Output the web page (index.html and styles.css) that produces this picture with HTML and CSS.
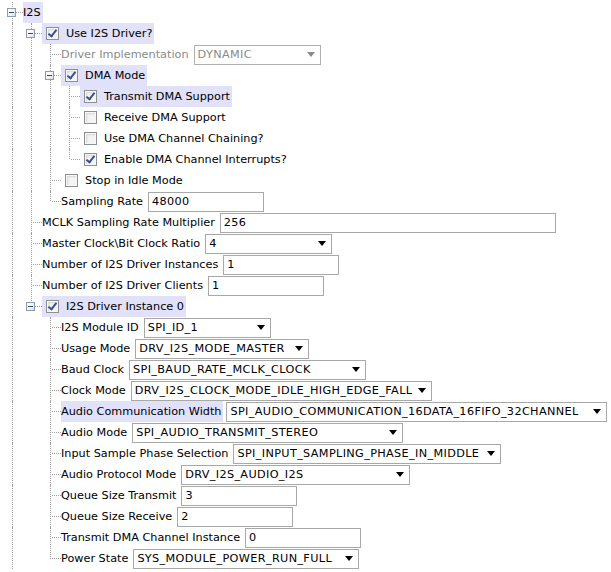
FILE: index.html
```html
<!DOCTYPE html>
<html>
<head>
<meta charset="utf-8">
<link rel="stylesheet" href="styles.css">
</head>
<body>
<div class="tree">
  <div class="row">
    <span class="conn root"><span class="exp"></span></span>
    <span class="item sel"><span class="lbl">I2S</span></span>
  </div>
  <div class="row">
    <span class="g pipe"></span>
    <span class="conn tee"><span class="exp"></span></span>
    <span class="item sel chk"><span class="cb on"></span><span class="lbl">Use I2S Driver?</span></span>
  </div>
  <div class="row">
    <span class="g pipe"></span><span class="g pipe"></span>
    <span class="conn tee"></span>
    <span class="item dis"><span class="lbl">Driver Implementation</span></span>
    <span class="field dd dis w127"><span class="val">DYNAMIC</span><span class="arrow"></span></span>
  </div>
  <div class="row">
    <span class="g pipe"></span><span class="g pipe"></span>
    <span class="conn tee"><span class="exp"></span></span>
    <span class="item sel chk"><span class="cb on"></span><span class="lbl">DMA Mode</span></span>
  </div>
  <div class="row">
    <span class="g pipe"></span><span class="g pipe"></span><span class="g pipe"></span>
    <span class="conn tee"></span>
    <span class="item sel chk"><span class="cb on"></span><span class="lbl">Transmit DMA Support</span></span>
  </div>
  <div class="row">
    <span class="g pipe"></span><span class="g pipe"></span><span class="g pipe"></span>
    <span class="conn tee"></span>
    <span class="item chk"><span class="cb"></span><span class="lbl">Receive DMA Support</span></span>
  </div>
  <div class="row">
    <span class="g pipe"></span><span class="g pipe"></span><span class="g pipe"></span>
    <span class="conn tee"></span>
    <span class="item chk"><span class="cb"></span><span class="lbl">Use DMA Channel Chaining?</span></span>
  </div>
  <div class="row">
    <span class="g pipe"></span><span class="g pipe"></span><span class="g pipe"></span>
    <span class="conn end"></span>
    <span class="item chk"><span class="cb on"></span><span class="lbl">Enable DMA Channel Interrupts?</span></span>
  </div>
  <div class="row">
    <span class="g pipe"></span><span class="g pipe"></span>
    <span class="conn tee"></span>
    <span class="item chk"><span class="cb"></span><span class="lbl">Stop in Idle Mode</span></span>
  </div>
  <div class="row">
    <span class="g pipe"></span><span class="g pipe"></span>
    <span class="conn end"></span>
    <span class="item"><span class="lbl">Sampling Rate</span></span>
    <span class="field w116"><span class="val">48000</span></span>
  </div>
  <div class="row">
    <span class="g pipe"></span>
    <span class="conn tee"></span>
    <span class="item"><span class="lbl">MCLK Sampling Rate Multiplier</span></span>
    <span class="field w336"><span class="val">256</span></span>
  </div>
  <div class="row">
    <span class="g pipe"></span>
    <span class="conn tee"></span>
    <span class="item"><span class="lbl">Master Clock\Bit Clock Ratio</span></span>
    <span class="field dd w127"><span class="val">4</span><span class="arrow"></span></span>
  </div>
  <div class="row">
    <span class="g pipe"></span>
    <span class="conn tee"></span>
    <span class="item"><span class="lbl">Number of I2S Driver Instances</span></span>
    <span class="field w116"><span class="val">1</span></span>
  </div>
  <div class="row">
    <span class="g pipe"></span>
    <span class="conn tee"></span>
    <span class="item"><span class="lbl">Number of I2S Driver Clients</span></span>
    <span class="field w116"><span class="val">1</span></span>
  </div>
  <div class="row">
    <span class="g pipe"></span>
    <span class="conn end"><span class="exp"></span></span>
    <span class="item sel chk"><span class="cb on"></span><span class="lbl">I2S Driver Instance 0</span></span>
  </div>
  <div class="row">
    <span class="g pipe"></span><span class="g"></span>
    <span class="conn tee"></span>
    <span class="item"><span class="lbl">I2S Module ID</span></span>
    <span class="field dd w127"><span class="val">SPI_ID_1</span><span class="arrow"></span></span>
  </div>
  <div class="row">
    <span class="g pipe"></span><span class="g"></span>
    <span class="conn tee"></span>
    <span class="item"><span class="lbl">Usage Mode</span></span>
    <span class="field dd w174"><span class="val">DRV_I2S_MODE_MASTER</span><span class="arrow"></span></span>
  </div>
  <div class="row">
    <span class="g pipe"></span><span class="g"></span>
    <span class="conn tee"></span>
    <span class="item"><span class="lbl">Baud Clock</span></span>
    <span class="field dd w237"><span class="val">SPI_BAUD_RATE_MCLK_CLOCK</span><span class="arrow"></span></span>
  </div>
  <div class="row">
    <span class="g pipe"></span><span class="g"></span>
    <span class="conn tee"></span>
    <span class="item"><span class="lbl">Clock Mode</span></span>
    <span class="field dd w301"><span class="val">DRV_I2S_CLOCK_MODE_IDLE_HIGH_EDGE_FALL</span><span class="arrow"></span></span>
  </div>
  <div class="row">
    <span class="g pipe"></span><span class="g"></span>
    <span class="conn tee"></span>
    <span class="item sel"><span class="lbl">Audio Communication Width</span></span>
    <span class="field dd w381"><span class="val">SPI_AUDIO_COMMUNICATION_16DATA_16FIFO_32CHANNEL</span><span class="arrow"></span></span>
  </div>
  <div class="row">
    <span class="g pipe"></span><span class="g"></span>
    <span class="conn tee"></span>
    <span class="item"><span class="lbl">Audio Mode</span></span>
    <span class="field dd w271"><span class="val">SPI_AUDIO_TRANSMIT_STEREO</span><span class="arrow"></span></span>
  </div>
  <div class="row">
    <span class="g pipe"></span><span class="g"></span>
    <span class="conn tee"></span>
    <span class="item"><span class="lbl">Input Sample Phase Selection</span></span>
    <span class="field dd w268"><span class="val">SPI_INPUT_SAMPLING_PHASE_IN_MIDDLE</span><span class="arrow"></span></span>
  </div>
  <div class="row">
    <span class="g pipe"></span><span class="g"></span>
    <span class="conn tee"></span>
    <span class="item"><span class="lbl">Audio Protocol Mode</span></span>
    <span class="field dd w229"><span class="val">DRV_I2S_AUDIO_I2S</span><span class="arrow"></span></span>
  </div>
  <div class="row">
    <span class="g pipe"></span><span class="g"></span>
    <span class="conn tee"></span>
    <span class="item"><span class="lbl">Queue Size Transmit</span></span>
    <span class="field w116"><span class="val">3</span></span>
  </div>
  <div class="row">
    <span class="g pipe"></span><span class="g"></span>
    <span class="conn tee"></span>
    <span class="item"><span class="lbl">Queue Size Receive</span></span>
    <span class="field w116"><span class="val">2</span></span>
  </div>
  <div class="row">
    <span class="g pipe"></span><span class="g"></span>
    <span class="conn tee"></span>
    <span class="item"><span class="lbl">Transmit DMA Channel Instance</span></span>
    <span class="field w116"><span class="val">0</span></span>
  </div>
  <div class="row">
    <span class="g pipe"></span><span class="g"></span>
    <span class="conn end"></span>
    <span class="item"><span class="lbl">Power State</span></span>
    <span class="field dd w226"><span class="val">SYS_MODULE_POWER_RUN_FULL</span><span class="arrow"></span></span>
  </div>
</div>
</body>
</html>
```
FILE: styles.css
```css
html, body {
  margin: 0;
  padding: 0;
  background: #ffffff;
}
body {
  font-family: "DejaVu Sans", "Liberation Sans", sans-serif;
  font-size: 11.25px;
  color: #000000;
  width: 611px;
  height: 572px;
  overflow: hidden;
}
.tree {
  display: flex;
  flex-direction: column;
  padding: 2px 0 0 1px;
}
.row {
  display: flex;
  align-items: center;
  height: 21px;
  white-space: nowrap;
}
.g {
  position: relative;
  flex: none;
  width: 19px;
  height: 21px;
}
.conn {
  position: relative;
  flex: none;
  width: 22px;
  height: 21px;
}
.pipe::before,
.conn::before {
  content: "";
  position: absolute;
  left: 11px;
  top: 0;
  width: 1px;
  height: 21px;
  background: repeating-linear-gradient(to bottom, #a0a0a0 0 1px, transparent 1px 2px);
}
.row:nth-child(even) .pipe::before,
.row:nth-child(even) .conn::before {
  background-position: 0 1px;
}
.conn.end::before {
  height: 11px;
}
.conn::after {
  content: "";
  position: absolute;
  left: 13px;
  top: 10px;
  width: 9px;
  height: 1px;
  background: repeating-linear-gradient(to right, #a0a0a0 0 1px, transparent 1px 2px);
}
.exp {
  position: absolute;
  left: 6px;
  top: 6px;
  width: 9px;
  height: 9px;
  box-sizing: border-box;
  border: 1px solid #8f9aad;
  background: linear-gradient(135deg, #ffffff 0%, #f2f2f2 60%, #dcdcdc 100%);
  z-index: 1;
}
.exp::after {
  content: "";
  position: absolute;
  left: 1px;
  top: 3px;
  width: 5px;
  height: 1px;
  background: #2d4d85;
}
.item {
  display: flex;
  align-items: center;
  height: 21px;
  padding: 0 2px 0 0;
  flex: none;
}
.item.chk {
  padding-left: 4px;
  gap: 7px;
}
.item.sel {
  background: #e1e1f9;
}
.item.dis {
  color: #8a8a8a;
}
.lbl {
  line-height: 21px;
}
.cb {
  position: relative;
  flex: none;
  width: 13px;
  height: 13px;
  box-sizing: border-box;
  border: 1px solid #8e8f8f;
  background: #f4f4f4;
  box-shadow: inset 0 0 0 1px #f7f7f7, inset 2px 2px 2px #d6d6d6;
}
.cb.on::after {
  content: "";
  position: absolute;
  left: 3px;
  top: 0px;
  width: 3px;
  height: 7px;
  border-right: 2px solid #3a4f8f;
  border-bottom: 2px solid #3a4f8f;
  transform: rotate(38deg);
}
.field {
  display: flex;
  align-items: center;
  flex: none;
  height: 20px;
  box-sizing: border-box;
  margin-left: 3px;
  padding-left: 3px;
  border: 1px solid #a8a8a8;
  background: #ffffff;
  letter-spacing: 0.35px;
}
.field.dis {
  color: #8a8a8a;
  border-color: #b0b0b0;
}
.arrow {
  margin-left: auto;
  margin-right: 5px;
  width: 0;
  height: 0;
  border-left: 4px solid transparent;
  border-right: 4px solid transparent;
  border-top: 5px solid #000000;
}
.field.dis .arrow {
  border-top-color: #8a8a8a;
}
.w116 { width: 116px; }
.w127 { width: 127px; }
.w174 { width: 174px; }
.w226 { width: 226px; }
.w229 { width: 229px; }
.w237 { width: 237px; }
.w268 { width: 268px; }
.w271 { width: 271px; }
.w301 { width: 301px; }
.w336 { width: 336px; }
.w381 { width: 381px; }
```
